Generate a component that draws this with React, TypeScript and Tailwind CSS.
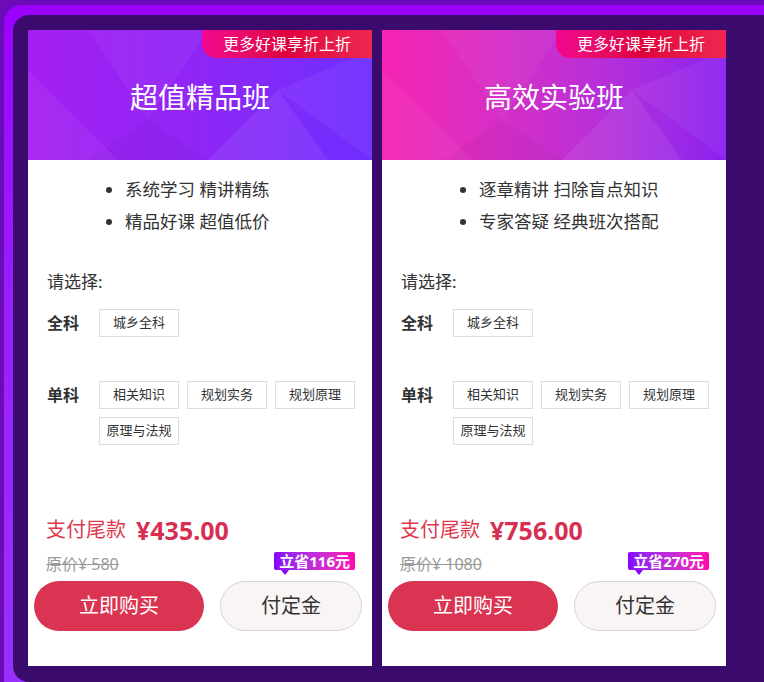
import React from "react";

type Plan = {
  title: string;
  headerClass: string;
  points: string[];
  price: string;
  original: string;
  save: string;
};

const plans: Plan[] = [
  {
    title: "超值精品班",
    headerClass: "bg-gradient-to-r from-[#a51ef2] via-[#8f26f6] to-[#6d2dff]",
    points: ["系统学习 精讲精练", "精品好课 超值低价"],
    price: "¥435.00",
    original: "原价¥ 580",
    save: "立省116元",
  },
  {
    title: "高效实验班",
    headerClass: "bg-gradient-to-r from-[#f622b2] via-[#c72fcf] to-[#8c1ff0]",
    points: ["逐章精讲 扫除盲点知识", "专家答疑 经典班次搭配"],
    price: "¥756.00",
    original: "原价¥ 1080",
    save: "立省270元",
  },
];

const singles = ["相关知识", "规划实务", "规划原理", "原理与法规"];

const Tag = ({ label }: { label: string }) => (
  <span className="flex h-[28px] w-[80px] items-center justify-center border border-[#dddddd] text-[13px] text-[#333]">
    {label}
  </span>
);

const HeaderPattern = () => (
  <svg
    className="absolute inset-0 h-full w-full"
    viewBox="0 0 344 130"
    preserveAspectRatio="none"
  >
    <polygon points="0,40 90,130 0,130" fill="#ffffff" opacity="0.05" />
    <polygon points="60,0 180,0 120,90" fill="#ffffff" opacity="0.04" />
    <polygon points="180,130 250,60 300,130" fill="#ffffff" opacity="0.07" />
    <polygon points="250,60 344,20 344,130" fill="#ffffff" opacity="0.05" />
    <polygon points="120,90 180,130 60,130" fill="#000000" opacity="0.03" />
  </svg>
);

const PlanCard = ({ plan }: { plan: Plan }) => (
  <div className="flex h-[636px] w-[344px] shrink-0 flex-col bg-white">
    <div
      className={`relative flex h-[130px] items-center justify-center pt-[4px] ${plan.headerClass}`}
    >
      <HeaderPattern />
      <span className="relative text-[28px] leading-[36px] text-white">
        {plan.title}
      </span>
      <div className="absolute right-0 top-0 flex h-[28px] w-[170px] items-center justify-center rounded-bl-[14px] bg-gradient-to-r from-[#f1068f] via-[#df003c] to-[#ef2650] text-[16px] leading-[28px] text-white">
        更多好课享折上折
      </div>
    </div>

    <ul className="mt-[13px] list-disc pl-[97px] text-[17.5px] leading-[32px] text-[#333]">
      {plan.points.map((p) => (
        <li key={p}>{p}</li>
      ))}
    </ul>

    <div className="pl-[19px] pr-[15px]">
      <p className="mt-[33px] text-[17px] leading-[24px] text-[#333]">请选择:</p>

      <div className="mt-[15px] flex items-start">
        <span className="w-[52px] shrink-0 text-[16px] font-bold leading-[28px] text-[#333]">
          全科
        </span>
        <Tag label="城乡全科" />
      </div>

      <div className="mt-[44px] flex items-start">
        <span className="w-[52px] shrink-0 text-[16px] font-bold leading-[28px] text-[#333]">
          单科
        </span>
        <div className="flex flex-wrap gap-[8px]">
          {singles.map((s) => (
            <Tag key={s} label={s} />
          ))}
        </div>
      </div>
    </div>

    <div className="mt-auto pb-[35px]">
      <div className="flex h-[30px] items-center px-[18px]">
        <span className="text-[20px] leading-[30px] text-[#e0394f]">支付尾款</span>
        <span className="ml-[10px] text-[25px] font-bold leading-[30px] text-[#d72f52]">
          {plan.price}
        </span>
      </div>
      <div className="mt-[7px] flex h-[24px] items-start justify-between pl-[18px] pr-[17px]">
        <span className="text-[16px] leading-[24px] text-[#999] line-through">
          {plan.original}
        </span>
        <span className="relative flex h-[18px] items-center rounded-[2px] bg-gradient-to-r from-[#8600ff] to-[#ff00ae] px-[5px] text-[15px] font-bold leading-[18px] text-white">
          {plan.save}
          <span className="absolute -bottom-[5px] left-[7px] h-0 w-0 border-l-[4px] border-r-[4px] border-t-[5px] border-l-transparent border-r-transparent border-t-[#8a00fc]" />
        </span>
      </div>
      <div className="mt-[5px] flex gap-[16px] pl-[6px] pr-[10px]">
        <button className="h-[50px] w-[170px] rounded-full bg-[#d93451] text-[20px] text-white">
          立即购买
        </button>
        <button className="h-[50px] flex-1 rounded-full border border-[#d8d4d4] bg-[#f9f5f5] text-[20px] text-[#333]">
          付定金
        </button>
      </div>
    </div>
  </div>
);

export default function App() {
  return (
    <div
      className="h-[682px] w-[764px] overflow-hidden bg-[#6c0cb8] pl-[4px] pt-[5px]"
      style={{ fontFamily: '"Noto Sans", "Noto Sans CJK SC", sans-serif' }}
    >
      <div className="h-full rounded-tl-[18px] bg-gradient-to-b from-[#9a00ff] to-[#9830ff] pl-[9px] pt-[10px]">
        <div className="flex h-full gap-[10px] rounded-l-[16px] bg-[#3a0b6c] pl-[15px] pt-[15px]">
          {plans.map((p) => (
            <PlanCard key={p.title} plan={p} />
          ))}
        </div>
      </div>
    </div>
  );
}
